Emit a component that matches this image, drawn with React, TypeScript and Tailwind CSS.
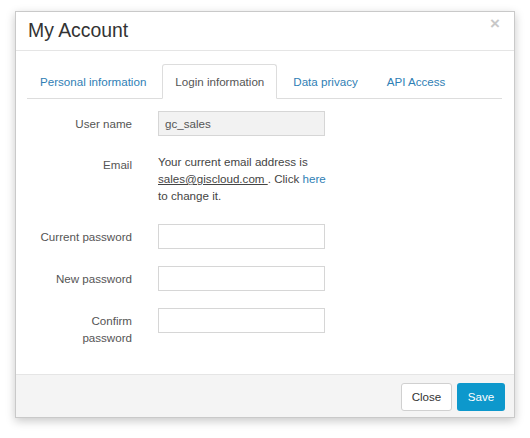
import React from "react";

const tabs = ["Personal information", "Login information", "Data privacy", "API Access"];

function Field({ label, children, labelPad = "pt-[4px]", className = "" }: { label: React.ReactNode; children: React.ReactNode; labelPad?: string; className?: string }) {
  return (
    <div className={`flex items-start ${className}`}>
      <div className={`w-[105px] shrink-0 text-right text-[11.6px] leading-[17px] text-[#555] ${labelPad}`}>{label}</div>
      <div className="ml-[26px]">{children}</div>
    </div>
  );
}

function TextInput({ value, disabled }: { value?: string; disabled?: boolean }) {
  return (
    <input
      type={disabled ? "text" : "password"}
      defaultValue={value}
      disabled={disabled}
      className={`block h-[25px] w-[167px] border border-[#d6d6d6] px-[6px] text-[11.6px] text-[#555] outline-none ${disabled ? "bg-[#f2f2f2]" : "bg-white"}`}
    />
  );
}

export default function App() {
  return (
    <div className="min-h-[438px] bg-white pt-[11px] pl-[15px]" style={{ fontFamily: '"Liberation Sans", Arial, sans-serif' }}>
      <div className="w-[500px] border border-[#c9c9c9] bg-white shadow-[0_3px_9px_rgba(0,0,0,0.22)]">
        {/* Header */}
        <div className="flex h-[39px] items-start justify-between border-b border-[#e5e5e5] pl-[12px] pr-[14px]">
          <h1 className="pt-[6px] text-[19.4px] leading-[24px] text-[#333]">My Account</h1>
          <button className="mt-[3px] text-[17px] font-bold leading-[18px] text-[#c8c8c8]">×</button>
        </div>

        {/* Body */}
        <div className="pl-[11px] pr-[12px] pt-[13px] pb-[28px]">
          <ul className="flex border-b border-[#dddddd]">
            {tabs.map((t) => {
              const active = t === "Login information";
              return (
                <li key={t} className="-mb-px mr-[3px]">
                  <a
                    className={`block rounded-t-[3px] border px-[12px] py-[9px] text-[11.6px] leading-[15px] ${
                      active
                        ? "border-[#dddddd] border-b-white bg-white text-[#555]"
                        : "border-transparent text-[#2f80b5]"
                    }`}
                  >
                    {t}
                  </a>
                </li>
              );
            })}
          </ul>

          <Field label="User name" className="mt-[12px]">
            <TextInput value="gc_sales" disabled />
          </Field>

          <Field label="Email" labelPad="pt-[3px]" className="mt-[17px]">
            <p className="w-[175px] text-[11.6px] leading-[17px] text-[#444]">
              Your current email address is <span className="underline">{"sales@giscloud.com "}</span>. Click{" "}
              <a className="text-[#2f80b5]">here</a> to change it.
            </p>
          </Field>

          <Field label="Current password" className="mt-[20px]">
            <TextInput />
          </Field>

          <Field label="New password" className="mt-[17px]">
            <TextInput />
          </Field>

          <Field
            label={
              <>
                Confirm
                <br />
                password
              </>
            }
            className="mt-[17px]"
          >
            <TextInput />
          </Field>
        </div>

        {/* Footer */}
        <div className="flex h-[43px] items-start justify-end gap-[5px] border-t border-[#e5e5e5] bg-[#f4f4f4] pr-[9px] pt-[8px]">
          <button className="h-[28px] w-[51px] rounded-[3px] border border-[#d0d0d0] bg-white text-[11.6px] text-[#333]">Close</button>
          <button className="h-[28px] w-[48px] rounded-[3px] bg-[#0d98cc] text-[11.6px] text-white">Save</button>
        </div>
      </div>
    </div>
  );
}
